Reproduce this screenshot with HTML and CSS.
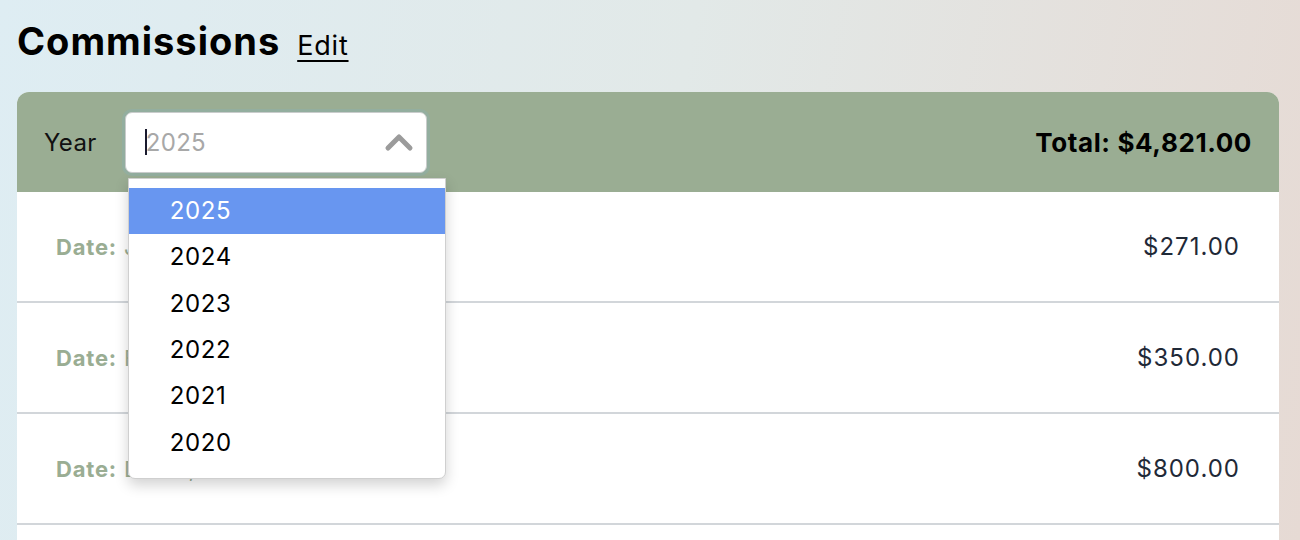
FILE: index.html
```html
<!DOCTYPE html>
<html lang="en">
<head>
<meta charset="utf-8">
<title>Commissions</title>
<link rel="stylesheet" href="styles.css">
</head>
<body>
<div class="page">
  <div class="title-row">
    <h1 class="title">Commissions</h1>
    <a class="edit" href="#">Edit</a>
  </div>
  <div class="card">
    <div class="card-head">
      <div class="year">
        <span class="year-label">Year</span>
        <div class="select-wrap">
          <div class="select">
            <span class="caret"></span>
            <span class="select-value">2025</span>
            <svg class="chev" width="30" height="20" viewBox="0 0 30 20"><path d="M4 16 L15 5 L26 16" fill="none" stroke="#9b9b9b" stroke-width="5" stroke-linecap="round" stroke-linejoin="round"/></svg>
          </div>
          <div class="menu">
            <div class="opt sel">2025</div>
            <div class="opt">2024</div>
            <div class="opt">2023</div>
            <div class="opt">2022</div>
            <div class="opt">2021</div>
            <div class="opt">2020</div>
          </div>
        </div>
      </div>
      <div class="total">Total: $4,821.00</div>
    </div>
    <div class="row"><span class="date"><b>Date:</b> Jan 9, 2025</span><span class="amt">$271.00</span></div>
    <div class="row"><span class="date"><b>Date:</b> Feb 2, 2025</span><span class="amt">$350.00</span></div>
    <div class="row"><span class="date"><b>Date:</b> Dec 9, 2024</span><span class="amt">$800.00</span></div>
    <div class="row row-empty"></div>
  </div>
</div>
</body>
</html>
```
FILE: styles.css
```css
html, body {
  margin: 0;
  height: 100%;
  overflow: hidden;
}
body {
  font-family: "Inter", "Liberation Sans", sans-serif;
  background: linear-gradient(100deg, #deedf3 0%, #e2e9e8 50%, #e6dad4 100%);
  color: #000;
}
.page {
  padding: 18px 21px 0 17px;
}
.title-row {
  display: flex;
  align-items: baseline;
  gap: 17px;
  height: 74px;
}
.title {
  margin: 0;
  font-size: 38px;
  font-weight: 700;
  letter-spacing: 1px;
  line-height: 46px;
}
.edit {
  color: #000;
  font-size: 27px;
  letter-spacing: 0.8px;
  text-decoration: underline;
  text-underline-offset: 5px;
  text-decoration-thickness: 2px;
}
.card {
  background: #fff;
  border-radius: 12px 12px 0 0;
}
.card-head {
  background: #9aad93;
  border-radius: 12px 12px 0 0;
  height: 100px;
  display: flex;
  align-items: center;
  justify-content: space-between;
  padding: 0 27px 0 27px;
  position: relative;
  z-index: 2;
}
.year {
  display: flex;
  align-items: center;
  gap: 28px;
}
.year-label {
  font-size: 24px;
  letter-spacing: 0.4px;
  color: #111;
}
.select-wrap {
  position: relative;
}
.select {
  width: 302px;
  height: 61px;
  box-sizing: border-box;
  border: 1px solid #c9cccc;
  border-radius: 7px;
  background: #fff;
  box-shadow: 0 0 0 3px rgba(140, 175, 175, 0.45);
  display: flex;
  align-items: center;
  padding: 0 12px 0 19px;
}
.caret {
  width: 2px;
  height: 26px;
  background: #1a1a2e;
  margin-right: -1px;
}
.select-value {
  font-size: 24px;
  letter-spacing: 0.3px;
  color: #a8a8a8;
  flex: 1;
}
.chev {
  display: block;
}
.menu {
  position: absolute;
  left: 3px;
  top: 66px;
  width: 318px;
  box-sizing: border-box;
  background: #fff;
  border: 1px solid #cfcfcf;
  border-radius: 0 0 7px 7px;
  box-shadow: 0 6px 14px rgba(0, 0, 0, 0.18);
  padding: 9px 0 13px 0;
}
.opt {
  height: 46.3px;
  display: flex;
  align-items: center;
  padding-left: 41px;
  font-size: 24px;
  letter-spacing: 0.6px;
  color: #000;
}
.opt.sel {
  background: #6896f0;
  color: #fff;
}
.total {
  font-size: 26px;
  font-weight: 700;
  letter-spacing: 0.6px;
}
.row {
  height: 109px;
  border-bottom: 2px solid #d2d6da;
  display: flex;
  align-items: center;
  justify-content: space-between;
  padding: 0 39px;
}
.date {
  font-size: 22px;
  letter-spacing: 0.8px;
  color: #9aad93;
}
.date b {
  font-weight: 700;
}
.amt {
  font-size: 24px;
  letter-spacing: 1px;
  color: #1f2937;
}
```
